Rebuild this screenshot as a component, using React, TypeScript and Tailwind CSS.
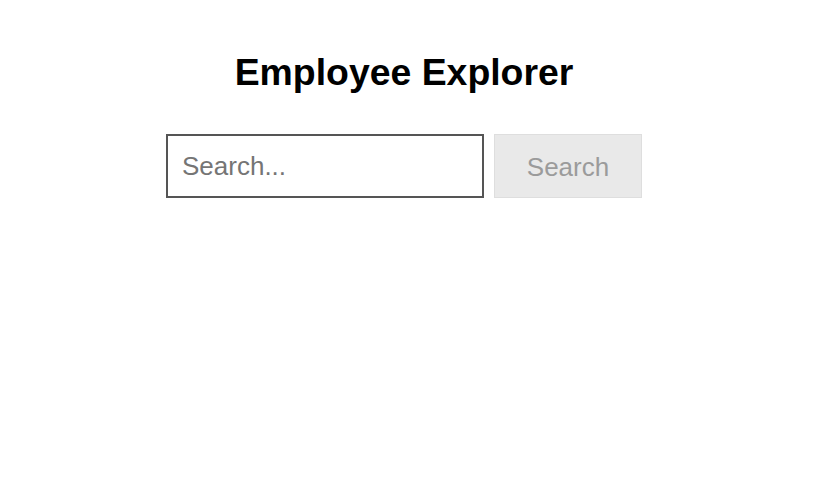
import { useState } from 'react';

const App = () => {
  const [query, setQuery] = useState('')

  return (
    <div className="w-[808px] min-h-[490px] bg-white flex flex-col items-center pt-[52px] font-['Liberation_Sans',Arial,sans-serif]">
      <h1 className="text-[37.4px] font-bold leading-[41px] text-black">Employee Explorer</h1>
      <div className="flex gap-[10px] mt-[41px]">
        <input
          autoFocus
          type="text"
          value={query}
          onChange={(e) => setQuery(e.target.value)}
          placeholder="Search..."
          className="w-[318px] h-[64px] border-2 border-[#555555] px-[14px] text-[26px] text-black placeholder:text-[#757575] outline-none caret-[#333]"
        />
        <button
          disabled={query.length < 1}
          className="w-[148px] h-[64px] bg-[#e9e9e9] border border-[#dedede] text-[26px] text-[#9b9b9b] pt-[2px]"
        >
          Search
        </button>
      </div>
    </div>
  )
}

export default App
